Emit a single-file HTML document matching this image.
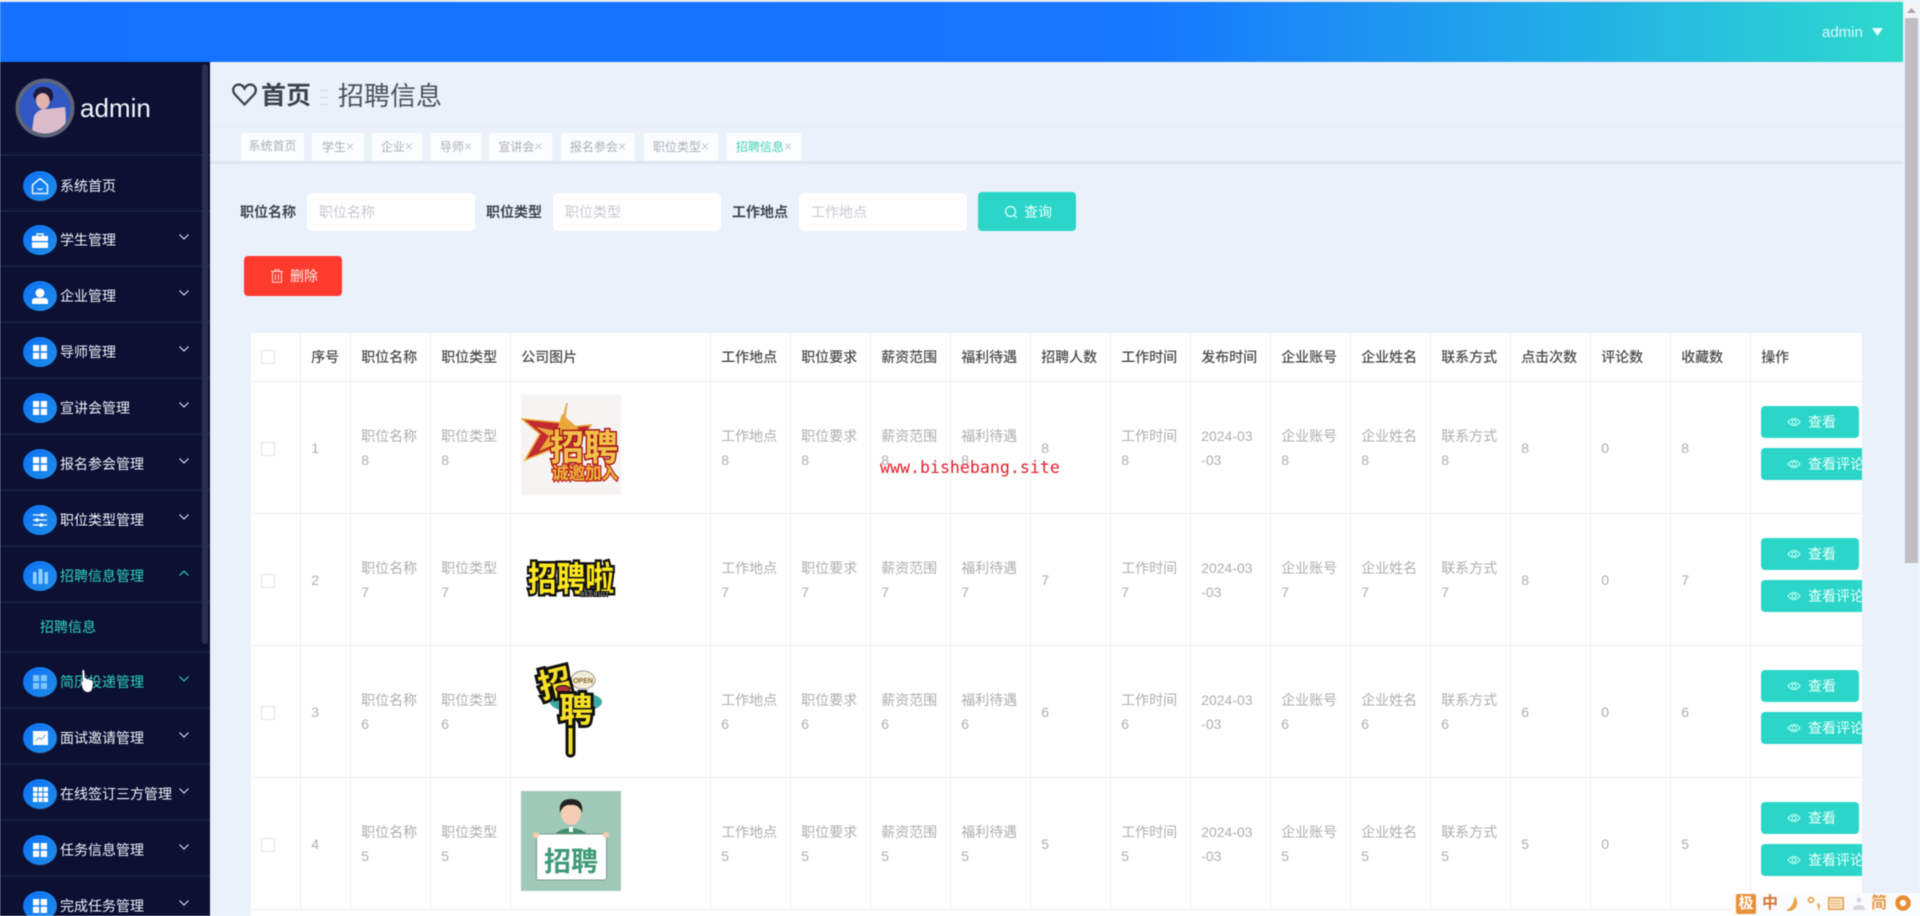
<!DOCTYPE html>
<html lang="zh-CN">
<head>
<meta charset="utf-8">
<title>招聘信息</title>
<style>
*{box-sizing:border-box;margin:0;padding:0}
html,body{width:1920px;height:916px;overflow:hidden;background:#fff}
body{font-family:"Liberation Sans","Noto Sans CJK SC",sans-serif;font-size:14px;position:relative}
#root{position:absolute;left:0;top:0;width:1920px;height:916px;overflow:hidden;background:#eaf1fb;filter:blur(.4px)}
.a{position:absolute}
#top{left:0;top:2px;width:1903px;height:60px;background:linear-gradient(90deg,#1570ff 0%,#1677ff 60%,#1e92f2 71.5%,#22aee6 82.5%,#2ac6da 92%,#2ed9cc 100%)}
#side{left:0;top:62px;width:210px;height:854px;background:#0c1033}
.line{position:absolute;left:0;width:210px;height:2px;background:#1a1f45}
.ic{position:absolute;left:23px;width:34px;height:30px;border-radius:50%;background:linear-gradient(135deg,#0f6ff5,#1e8fe6);display:flex;align-items:center;justify-content:center}
.t{position:absolute;left:60px;color:#eef2fa;font-size:14px;line-height:20px;white-space:nowrap}
.act{color:#2fd3c1}
.ch{position:absolute;left:179px;width:10px;height:6px;margin-top:1px}
table{position:absolute;left:251px;top:333px;width:1611px;table-layout:fixed;border-collapse:collapse;background:#fff}
th,td{border-right:1px solid #eceef4;border-bottom:1px solid #eceef4;text-align:left;padding:0 0 0 10px;font-size:14px;vertical-align:middle;overflow:hidden}
th{height:48.5px;color:#4a4a4a;font-weight:500}
td{height:132px;color:#aeaeae;line-height:23.5px;padding-top:2px}
th:last-child,td:last-child{border-right:none}
.cb{width:14px;height:14px;border:1px solid #dfe3ea;background:#fff;display:block;border-radius:1px}
.pic{display:block;width:100px;height:100px;position:relative;top:-4px}
.btn{position:absolute;left:1761px;width:98px;height:32px;background:#2bd6c9;border-radius:4px;color:#e8fffc;font-size:14px;line-height:32px}
.btn span{position:absolute;left:47px;top:0;white-space:nowrap}
.btn svg{position:absolute;left:26px;top:10px}
.b2{width:101px;border-radius:4px 0 0 4px;overflow:hidden}
.tab{position:absolute;top:132px;height:29px;background:#fbfcfe;border:1px solid #eef1f6;border-bottom:none;color:#aab0b8;font-size:12px;line-height:27px;text-align:center;white-space:nowrap}
.tab i{font-style:normal;color:#c4c8cf;font-size:14px}
.lab{position:absolute;top:202px;font-weight:700;color:#3f4650;font-size:14px;line-height:20px;white-space:nowrap}
.inp{position:absolute;top:193px;width:168px;height:38px;background:#fff;border-radius:5px;color:#c6c9cf;font-size:14px;line-height:38px;padding-left:12px}
</style>
</head>
<body>
<div id="root">

<!-- top bar -->
<div class="a" style="left:0;top:0;width:1920px;height:2px;background:#dfe6ef"></div>
<div class="a" id="top"></div>
<div class="a" style="left:1822px;top:24px;color:#d6fbff;font-size:15px;line-height:18px">admin</div>
<svg class="a" style="left:1872px;top:28px" width="11" height="8"><path d="M0 0H11L5.500 8Z" fill="#e6ffff"/></svg>

<!-- page scrollbar -->
<div class="a" style="left:1903px;top:0;width:17px;height:916px;background:#eaf1fb"></div>
<div class="a" style="left:1905px;top:2px;width:13px;height:16px;background:#f4f4f6"></div>
<svg class="a" style="left:1907px;top:8px" width="9" height="5"><path d="M0 5L4.500 0L9 5Z" fill="#a5a5aa"/></svg>
<div class="a" style="left:1905px;top:18px;width:13px;height:545px;background:#bebec3"></div>

<!-- breadcrumb -->
<svg class="a" style="left:232px;top:83px" width="25" height="23" viewBox="0 0 25 23"><path d="M12.500 21.500L3 11.500C0 8 1 3.500 4.500 2 8 .7 11 2.500 12.500 5.500 14 2.500 17 .7 20.500 2 24 3.500 25 8 22 11.500Z" fill="none" stroke="#3a4450" stroke-width="2.300"/></svg>
<div class="a" style="left:261px;top:79px;font-size:25px;line-height:34px;font-weight:700;color:#3a424d">首页</div>
<div class="a" style="left:320px;top:90px;width:8px;height:15px;border-top:1px solid #d6dce6;border-bottom:1px solid #d6dce6"></div>
<div class="a" style="left:320px;top:97px;width:8px;height:1px;background:#d6dce6"></div>
<div class="a" style="left:338px;top:79px;font-size:26px;line-height:34px;color:#4a525d">招聘信息</div>
<div class="a" style="left:210px;top:126px;width:1693px;height:1px;background:#e2e8f2"></div>

<!-- tabs -->
<div class="tab" style="left:240px;width:65px">系统首页</div>
<div class="tab" style="left:311px;width:54px">学生<i>×</i></div>
<div class="tab" style="left:371px;width:52px">企业<i>×</i></div>
<div class="tab" style="left:430px;width:52px">导师<i>×</i></div>
<div class="tab" style="left:488px;width:65px">宣讲会<i>×</i></div>
<div class="tab" style="left:560px;width:76px">报名参会<i>×</i></div>
<div class="tab" style="left:643px;width:76px">职位类型<i>×</i></div>
<div class="tab" style="left:726px;width:76px;color:#46d3b8">招聘信息<i>×</i></div>
<div class="a" style="left:210px;top:161px;width:1693px;height:3px;background:#dfe5ef"></div>

<!-- search -->
<div class="lab" style="left:240px">职位名称</div>
<div class="inp" style="left:307px">职位名称</div>
<div class="lab" style="left:486px">职位类型</div>
<div class="inp" style="left:553px">职位类型</div>
<div class="lab" style="left:732px">工作地点</div>
<div class="inp" style="left:799px">工作地点</div>
<div class="a" style="left:978px;top:192px;width:98px;height:39px;background:#2bd6c9;border-radius:4px"></div>
<svg class="a" style="left:1004px;top:205px" width="14" height="14" viewBox="0 0 14 14"><circle cx="6.500" cy="6.500" r="5" fill="none" stroke="#e0fffb" stroke-width="1.200"/><path d="M10.200 10.200L13 13" stroke="#e0fffb" stroke-width="1.200"/></svg>
<div class="a" style="left:1024px;top:202px;color:#e8fffc;font-size:14px;line-height:20px">查询</div>

<div class="a" style="left:244px;top:256px;width:98px;height:40px;background:#ff3b2e;border-radius:4px"></div>
<svg class="a" style="left:271px;top:269px" width="12" height="14" viewBox="0 0 12 14"><path d="M0 2.500H12M4 2.500V.7H8V2.500M1.500 2.500V13.300H10.500V2.500M4.500 5V11M7.500 5V11" fill="none" stroke="#ffd9d4" stroke-width="1"/></svg>
<div class="a" style="left:290px;top:266px;color:#ffeeea;font-size:14px;line-height:20px">删除</div>

<!-- table -->
<table>
<colgroup>
<col style="width:49.700px"><col style="width:50px"><col style="width:80px"><col style="width:80px"><col style="width:200px">
<col style="width:80px"><col style="width:80px"><col style="width:80px"><col style="width:80px"><col style="width:80px"><col style="width:80px"><col style="width:80px"><col style="width:80px"><col style="width:80px"><col style="width:80px"><col style="width:80px"><col style="width:80px"><col style="width:80px">
<col>
</colgroup>
<tr>
<th><span class="cb"></span></th><th>序号</th><th>职位名称</th><th>职位类型</th><th>公司图片</th><th>工作地点</th><th>职位要求</th><th>薪资范围</th><th>福利待遇</th><th>招聘人数</th><th>工作时间</th><th>发布时间</th><th>企业账号</th><th>企业姓名</th><th>联系方式</th><th>点击次数</th><th>评论数</th><th>收藏数</th><th>操作</th>
</tr>
<tr>
<td><span class="cb"></span></td><td>1</td><td>职位名称<br>8</td><td>职位类型<br>8</td>
<td><svg class="pic" viewBox="0 0 100 100"><rect width="100" height="100" fill="#f5f4f3"/><path d="M46 8L43 28L1 24L19 39L4 65L31 54L50 60L70 30L40 33Z" fill="#c22a30" stroke="#e8a838" stroke-width="1.500"/><path d="M41 19L36 36L15 32L28 41L18 56L38 48L58 34Z" fill="#e9a838"/><text x="63" y="65" text-anchor="middle" font-size="36" font-weight="700" fill="#f1c24a" stroke="#a8181c" stroke-width="3" paint-order="stroke" font-family="'Liberation Sans','Noto Sans CJK SC',sans-serif" textLength="68" lengthAdjust="spacingAndGlyphs">招聘</text><text x="64" y="84" text-anchor="middle" font-size="17" font-weight="700" fill="#e8b93c" stroke="#c0201c" stroke-width="2.500" paint-order="stroke" font-family="'Liberation Sans','Noto Sans CJK SC',sans-serif" textLength="66" lengthAdjust="spacingAndGlyphs">诚邀加入</text></svg></td>
<td>工作地点<br>8</td><td>职位要求<br>8</td><td>薪资范围<br>8</td><td>福利待遇<br>8</td><td>8</td><td>工作时间<br>8</td><td>2024-03<br>-03</td><td>企业账号<br>8</td><td>企业姓名<br>8</td><td>联系方式<br>8</td><td>8</td><td>0</td><td>8</td><td></td>
</tr>
<tr>
<td><span class="cb"></span></td><td>2</td><td>职位名称<br>7</td><td>职位类型<br>7</td>
<td><svg class="pic" viewBox="0 0 100 100"><rect width="100" height="100" fill="#fff"/><text x="50" y="64" text-anchor="middle" font-size="34" font-weight="700" fill="#ffe81e" stroke="#111" stroke-width="5" paint-order="stroke" font-family="'Liberation Sans','Noto Sans CJK SC',sans-serif" textLength="86" lengthAdjust="spacingAndGlyphs">招聘啦</text><text x="74" y="69" text-anchor="middle" font-size="5" fill="#ddd" stroke="#111" stroke-width="2" paint-order="stroke" letter-spacing="1">RECRUIT</text></svg></td>
<td>工作地点<br>7</td><td>职位要求<br>7</td><td>薪资范围<br>7</td><td>福利待遇<br>7</td><td>7</td><td>工作时间<br>7</td><td>2024-03<br>-03</td><td>企业账号<br>7</td><td>企业姓名<br>7</td><td>联系方式<br>7</td><td>8</td><td>0</td><td>7</td><td></td>
</tr>
<tr>
<td><span class="cb"></span></td><td>3</td><td>职位名称<br>6</td><td>职位类型<br>6</td>
<td><svg class="pic" viewBox="0 0 100 100"><rect width="100" height="100" fill="#fff"/><ellipse cx="55" cy="43" rx="26" ry="10" fill="#3fa8a4"/><ellipse cx="62" cy="21" rx="12" ry="9" fill="#f2ecd8" stroke="#999" stroke-width="1"/><text x="62" y="24" text-anchor="middle" font-size="7" font-weight="700" fill="#8a6a2a">OPEN</text><rect x="46" y="60" width="7" height="37" rx="3" fill="#f8e027" stroke="#111" stroke-width="3"/><text x="34" y="36" text-anchor="middle" font-size="33" font-weight="700" fill="#f8e027" stroke="#111" stroke-width="6" paint-order="stroke" font-family="'Liberation Sans','Noto Sans CJK SC',sans-serif" transform="rotate(-14 34 24)">招</text><ellipse cx="42" cy="30" rx="7" ry="3.500" fill="#a83238" stroke="#111" stroke-width="1"/><text x="55" y="63" text-anchor="middle" font-size="34" font-weight="700" fill="#f8e027" stroke="#111" stroke-width="6" paint-order="stroke" font-family="'Liberation Sans','Noto Sans CJK SC',sans-serif">聘</text></svg></td>
<td>工作地点<br>6</td><td>职位要求<br>6</td><td>薪资范围<br>6</td><td>福利待遇<br>6</td><td>6</td><td>工作时间<br>6</td><td>2024-03<br>-03</td><td>企业账号<br>6</td><td>企业姓名<br>6</td><td>联系方式<br>6</td><td>6</td><td>0</td><td>6</td><td></td>
</tr>
<tr>
<td><span class="cb"></span></td><td>4</td><td>职位名称<br>5</td><td>职位类型<br>5</td>
<td><svg class="pic" viewBox="0 0 100 100"><rect width="100" height="100" fill="#a0c9b8"/><path d="M32 44Q50 30 68 44V50H32Z" fill="#3f8f6a"/><ellipse cx="50" cy="22" rx="10" ry="12" fill="#f5cdb4"/><path d="M39 22Q37 8 50 8Q63 8 61 22Q58 13 50 14Q42 13 39 22Z" fill="#222"/><rect x="48" y="36" width="4" height="5" fill="#fff"/><rect x="15.500" y="43" width="70" height="46" rx="2" fill="#fff" stroke="#7c9a8c" stroke-width="1"/><circle cx="15" cy="44" r="3" fill="#f5cdb4"/><circle cx="85" cy="44" r="3" fill="#f5cdb4"/><text x="50" y="80" text-anchor="middle" font-size="27" font-weight="700" fill="#3f9a75" font-family="'Liberation Sans','Noto Sans CJK SC',sans-serif">招聘</text></svg></td>
<td>工作地点<br>5</td><td>职位要求<br>5</td><td>薪资范围<br>5</td><td>福利待遇<br>5</td><td>5</td><td>工作时间<br>5</td><td>2024-03<br>-03</td><td>企业账号<br>5</td><td>企业姓名<br>5</td><td>联系方式<br>5</td><td>5</td><td>0</td><td>5</td><td></td>
</tr>
</table>

<!-- row action buttons -->
<div class="btn" style="top:406px"><svg width="14" height="12" viewBox="0 0 14 12"><path d="M1 6Q7 -1 13 6Q7 13 1 6Z" fill="none" stroke="#c8fff7" stroke-width="1"/><circle cx="7" cy="6" r="2" fill="none" stroke="#c8fff7" stroke-width="1"/></svg><span>查看</span></div>
<div class="btn b2" style="top:448px"><svg width="14" height="12" viewBox="0 0 14 12"><path d="M1 6Q7 -1 13 6Q7 13 1 6Z" fill="none" stroke="#c8fff7" stroke-width="1"/><circle cx="7" cy="6" r="2" fill="none" stroke="#c8fff7" stroke-width="1"/></svg><span>查看评论</span></div>
<div class="btn" style="top:538px"><svg width="14" height="12" viewBox="0 0 14 12"><path d="M1 6Q7 -1 13 6Q7 13 1 6Z" fill="none" stroke="#c8fff7" stroke-width="1"/><circle cx="7" cy="6" r="2" fill="none" stroke="#c8fff7" stroke-width="1"/></svg><span>查看</span></div>
<div class="btn b2" style="top:580px"><svg width="14" height="12" viewBox="0 0 14 12"><path d="M1 6Q7 -1 13 6Q7 13 1 6Z" fill="none" stroke="#c8fff7" stroke-width="1"/><circle cx="7" cy="6" r="2" fill="none" stroke="#c8fff7" stroke-width="1"/></svg><span>查看评论</span></div>
<div class="btn" style="top:670px"><svg width="14" height="12" viewBox="0 0 14 12"><path d="M1 6Q7 -1 13 6Q7 13 1 6Z" fill="none" stroke="#c8fff7" stroke-width="1"/><circle cx="7" cy="6" r="2" fill="none" stroke="#c8fff7" stroke-width="1"/></svg><span>查看</span></div>
<div class="btn b2" style="top:712px"><svg width="14" height="12" viewBox="0 0 14 12"><path d="M1 6Q7 -1 13 6Q7 13 1 6Z" fill="none" stroke="#c8fff7" stroke-width="1"/><circle cx="7" cy="6" r="2" fill="none" stroke="#c8fff7" stroke-width="1"/></svg><span>查看评论</span></div>
<div class="btn" style="top:802px"><svg width="14" height="12" viewBox="0 0 14 12"><path d="M1 6Q7 -1 13 6Q7 13 1 6Z" fill="none" stroke="#c8fff7" stroke-width="1"/><circle cx="7" cy="6" r="2" fill="none" stroke="#c8fff7" stroke-width="1"/></svg><span>查看</span></div>
<div class="btn b2" style="top:844px"><svg width="14" height="12" viewBox="0 0 14 12"><path d="M1 6Q7 -1 13 6Q7 13 1 6Z" fill="none" stroke="#c8fff7" stroke-width="1"/><circle cx="7" cy="6" r="2" fill="none" stroke="#c8fff7" stroke-width="1"/></svg><span>查看评论</span></div>

<!-- table continuation below last row -->
<div class="a" style="left:251px;top:910px;width:1611px;height:6px;background:#fff"></div>

<!-- watermark -->
<div class="a" style="left:880px;top:458px;font-family:'DejaVu Sans Mono','Liberation Mono',monospace;font-size:16.600px;line-height:20px;color:#e3202c;white-space:nowrap">www.bishebang.site</div>

<!-- sidebar -->
<div class="a" id="side"></div>
<svg class="a" style="left:15px;top:78px" width="60" height="60" viewBox="0 0 60 60"><defs><clipPath id="av"><circle cx="30" cy="30" r="25.500"/></clipPath></defs><circle cx="30" cy="30" r="29.500" fill="#5e6478"/><circle cx="30" cy="30" r="25.500" fill="#2f58c2"/><g clip-path="url(#av)"><path d="M16 60L19 38Q24 30 32 31L50 29Q52 42 49 60Z" fill="#dcbccb"/><ellipse cx="28" cy="22" rx="7" ry="9" fill="#e0b4a8"/><path d="M18 18Q20 8 30 9Q39 10 38 20Q36 24 35 24Q34 15 27 15Q22 16 20 22Z" fill="#1e1a3a"/></g></svg>
<div class="a" style="left:80px;top:92px;color:#f2f4fa;font-size:26px;line-height:32px">admin</div>
<div class="line" style="top:154px"></div>

<div class="ic" style="top:171px"><svg width="18" height="18" viewBox="0 0 18 18"><path d="M9 1.500L16.500 8V16.500H1.500V8Z" fill="none" stroke="#e6f3ff" stroke-width="1.500" stroke-linejoin="round"/><path d="M6.500 11.500Q9 14 11.500 11.500" fill="none" stroke="#e6f3ff" stroke-width="1.300"/></svg></div>
<div class="t" style="top:176px">系统首页</div>
<div class="line" style="top:210px"></div>

<div class="ic" style="top:225px"><svg width="16" height="15" viewBox="0 0 16 15"><path d="M5 3V1H11V3" fill="none" stroke="#fff" stroke-width="1.400"/><path d="M0 3H16V8H0ZM0 9.200H16V15H0Z" fill="#fff"/></svg></div>
<div class="t" style="top:230px">学生管理</div>
<svg class="ch" style="top:233px" viewBox="0 0 10 6"><path d="M.5.5L5 5L9.500.5" fill="none" stroke="#dfe6f5" stroke-width="1.100"/></svg>
<div class="line" style="top:265px"></div>

<div class="ic" style="top:281px"><svg width="16" height="16" viewBox="0 0 16 16"><circle cx="8" cy="5" r="4.500" fill="#fff"/><path d="M0 16V13Q0 10 4 10H12Q16 10 16 13V16Z" fill="#fff"/></svg></div>
<div class="t" style="top:286px">企业管理</div>
<svg class="ch" style="top:289px" viewBox="0 0 10 6"><path d="M.5.5L5 5L9.500.5" fill="none" stroke="#dfe6f5" stroke-width="1.100"/></svg>
<div class="line" style="top:321px"></div>

<div class="ic" style="top:337px"><svg width="14" height="14" viewBox="0 0 14 14"><path d="M0 0H6.200V6.200H0ZM7.800 0H14V6.200H7.800ZM0 7.800H6.200V14H0ZM7.800 7.800H14V14H7.800Z" fill="#fff"/></svg></div>
<div class="t" style="top:342px">导师管理</div>
<svg class="ch" style="top:345px" viewBox="0 0 10 6"><path d="M.5.5L5 5L9.500.5" fill="none" stroke="#dfe6f5" stroke-width="1.100"/></svg>
<div class="line" style="top:377px"></div>

<div class="ic" style="top:393px"><svg width="14" height="14" viewBox="0 0 14 14"><path d="M0 0H6.200V6.200H0ZM7.800 0H14V6.200H7.800ZM0 7.800H6.200V14H0ZM7.800 7.800H14V14H7.800Z" fill="#fff"/></svg></div>
<div class="t" style="top:398px">宣讲会管理</div>
<svg class="ch" style="top:401px" viewBox="0 0 10 6"><path d="M.5.5L5 5L9.500.5" fill="none" stroke="#dfe6f5" stroke-width="1.100"/></svg>
<div class="line" style="top:433px"></div>

<div class="ic" style="top:449px"><svg width="14" height="14" viewBox="0 0 14 14"><path d="M0 0H6.200V6.200H0ZM7.800 0H14V6.200H7.800ZM0 7.800H6.200V14H0ZM7.800 7.800H14V14H7.800Z" fill="#fff"/></svg></div>
<div class="t" style="top:454px">报名参会管理</div>
<svg class="ch" style="top:457px" viewBox="0 0 10 6"><path d="M.5.500L5 5L9.500.5" fill="none" stroke="#dfe6f5" stroke-width="1.100"/></svg>
<div class="line" style="top:489px"></div>

<div class="ic" style="top:505px"><svg width="16" height="14" viewBox="0 0 16 14"><path d="M1 2H15M1 7H15M1 12H15" stroke="#fff" stroke-width="1.300"/><circle cx="10" cy="2" r="1.800" fill="#fff"/><circle cx="5" cy="7" r="1.800" fill="#fff"/><circle cx="9" cy="12" r="1.800" fill="#fff"/></svg></div>
<div class="t" style="top:510px">职位类型管理</div>
<svg class="ch" style="top:513px" viewBox="0 0 10 6"><path d="M.5.5L5 5L9.500.5" fill="none" stroke="#dfe6f5" stroke-width="1.100"/></svg>
<div class="line" style="top:545px"></div>

<div class="ic" style="top:561px"><svg width="15" height="15" viewBox="0 0 15 15"><path d="M0 3H3.500V15H0ZM5.500 0H9.500V15H5.500ZM11.500 3H15V15H11.500Z" fill="#8fd0ff"/></svg></div>
<div class="t act" style="top:566px">招聘信息管理</div>
<svg class="ch" style="top:569px" viewBox="0 0 10 6"><path d="M.5 5.500L5 1L9.500 5.500" fill="none" stroke="#2fd3c1" stroke-width="1.100"/></svg>
<div class="line" style="top:601px"></div>
<div class="t act" style="left:40px;top:617px">招聘信息</div>
<div class="line" style="top:651px"></div>

<div class="ic" style="top:667px"><svg width="14" height="14" viewBox="0 0 14 14"><path d="M0 0H6.200V6.200H0ZM7.800 0H14V6.200H7.800ZM0 7.800H6.200V14H0ZM7.800 7.800H14V14H7.800Z" fill="#7fc4ff"/></svg></div>
<div class="t act" style="top:672px">简历投递管理</div>
<svg class="ch" style="top:675px" viewBox="0 0 10 6"><path d="M.5.5L5 5L9.500.5" fill="none" stroke="#2fd3c1" stroke-width="1.100"/></svg>
<div class="line" style="top:707px"></div>

<div class="ic" style="top:723px"><svg width="15" height="14" viewBox="0 0 15 14"><rect width="15" height="14" fill="#fff"/><path d="M2.500 10L6 6.500L8 8.500L12.500 4" fill="none" stroke="#6aa8e8" stroke-width="1"/></svg></div>
<div class="t" style="top:728px">面试邀请管理</div>
<svg class="ch" style="top:731px" viewBox="0 0 10 6"><path d="M.5.5L5 5L9.500.5" fill="none" stroke="#dfe6f5" stroke-width="1.100"/></svg>
<div class="line" style="top:763px"></div>

<div class="ic" style="top:779px"><svg width="15" height="15" viewBox="0 0 15 15"><rect width="15" height="15" fill="#fff"/><path d="M5 0V15M10 0V15M0 5H15M0 10H15" stroke="#1b7fee" stroke-width="1"/></svg></div>
<div class="t" style="top:784px">在线签订三方管理</div>
<svg class="ch" style="top:787px" viewBox="0 0 10 6"><path d="M.5.5L5 5L9.500.5" fill="none" stroke="#dfe6f5" stroke-width="1.100"/></svg>
<div class="line" style="top:819px"></div>

<div class="ic" style="top:835px"><svg width="14" height="14" viewBox="0 0 14 14"><path d="M0 0H6.200V6.200H0ZM7.800 0H14V6.200H7.800ZM0 7.800H6.200V14H0ZM7.800 7.800H14V14H7.800Z" fill="#fff"/></svg></div>
<div class="t" style="top:840px">任务信息管理</div>
<svg class="ch" style="top:843px" viewBox="0 0 10 6"><path d="M.5.5L5 5L9.500.5" fill="none" stroke="#dfe6f5" stroke-width="1.100"/></svg>
<div class="line" style="top:875px"></div>

<div class="ic" style="top:891px"><svg width="14" height="14" viewBox="0 0 14 14"><path d="M0 0H6.200V6.200H0ZM7.800 0H14V6.200H7.800ZM0 7.800H6.200V14H0ZM7.800 7.800H14V14H7.800Z" fill="#fff"/></svg></div>
<div class="t" style="top:896px">完成任务管理</div>
<svg class="ch" style="top:899px" viewBox="0 0 10 6"><path d="M.5.5L5 5L9.500.5" fill="none" stroke="#dfe6f5" stroke-width="1.100"/></svg>

<!-- sidebar scrollbar -->
<div class="a" style="left:202px;top:64px;width:6px;height:580px;background:#2b2e4f;border-radius:3px"></div>

<!-- cursor -->
<svg class="a" style="left:80px;top:669px" width="14" height="24" viewBox="0 0 14 24"><path d="M2 1.500Q3.500 0 4.500 1.500L5 9L6.500 8.500L7 10L9 9.500L10 11L12 11Q13.500 12 13 16L12 21Q10 24 6 23Q3 22 2 18L.8 13Q.5 11 2 12L2.500 13Z" fill="#fff" stroke="#1c2140" stroke-width=".6"/></svg>

<!-- IME toolbar -->
<div class="a" style="left:1733px;top:893px;width:187px;height:23px;background:#fafbfd"></div>
<div class="a" style="left:1736px;top:894px;width:20px;height:20px;background:#e8913a;border-radius:2px;color:#fff;font-size:15px;font-weight:700;line-height:20px;text-align:center">极</div>
<div class="a" style="left:1762px;top:894px;color:#d9733a;font-size:16px;font-weight:700;line-height:20px">中</div>
<svg class="a" style="left:1785px;top:895px" width="16" height="18" viewBox="0 0 16 18"><path d="M10 1Q15 10 8 15Q4 17 1 15Q8 13 10 1Z" fill="#eba23e"/></svg>
<svg class="a" style="left:1807px;top:896px" width="16" height="16" viewBox="0 0 16 16"><circle cx="4" cy="4" r="2.500" fill="none" stroke="#e89a3c" stroke-width="1.500"/><path d="M11 7Q15 10 11 15Q12 11 10 9Z" fill="#eba23e"/></svg>
<svg class="a" style="left:1828px;top:897px" width="16" height="13" viewBox="0 0 16 13"><rect x=".7" y=".7" width="14.600" height="11.600" fill="#f5e3c4" stroke="#e39a45" stroke-width="1.400"/><path d="M3 4H13M3 6.500H13M4 9H12" stroke="#e39a45" stroke-width="1" stroke-dasharray="1.500 1"/></svg>
<svg class="a" style="left:1852px;top:896px" width="14" height="16" viewBox="0 0 14 16"><circle cx="7" cy="4" r="2.500" fill="#d6d8de"/><path d="M1 14Q1 9 7 9Q13 9 13 14Z" fill="#d6d8de"/></svg>
<div class="a" style="left:1871px;top:894px;color:#e39a45;font-size:16px;font-weight:700;line-height:20px">简</div>
<svg class="a" style="left:1895px;top:895px" width="16" height="16" viewBox="0 0 16 16"><circle cx="8" cy="8" r="5.500" fill="none" stroke="#e58e2f" stroke-width="4.500"/></svg>

</div>
</body>
</html>
